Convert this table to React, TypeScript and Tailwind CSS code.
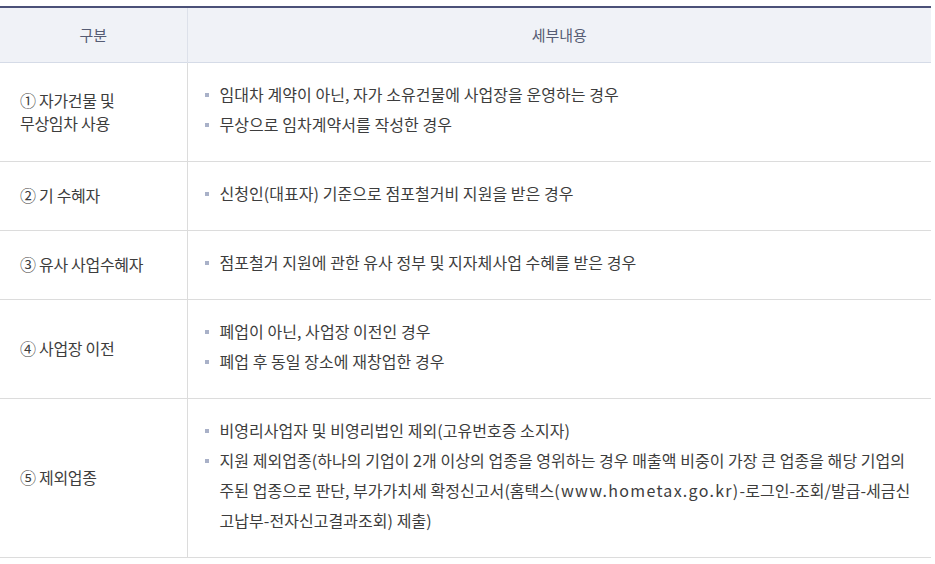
import type { ReactNode } from "react";

const rows: { label: string[]; items: ReactNode[] }[] = [
  {
    label: ["① 자가건물 및", "무상임차 사용"],
    items: [
      "임대차 계약이 아닌, 자가 소유건물에 사업장을 운영하는 경우",
      "무상으로 임차계약서를 작성한 경우",
    ],
  },
  {
    label: ["② 기 수혜자"],
    items: ["신청인(대표자) 기준으로 점포철거비 지원을 받은 경우"],
  },
  {
    label: ["③ 유사 사업수혜자"],
    items: ["점포철거 지원에 관한 유사 정부 및 지자체사업 수혜를 받은 경우"],
  },
  {
    label: ["④ 사업장 이전"],
    items: ["폐업이 아닌, 사업장 이전인 경우", "폐업 후 동일 장소에 재창업한 경우"],
  },
  {
    label: ["⑤ 제외업종"],
    items: [
      "비영리사업자 및 비영리법인 제외(고유번호증 소지자)",
      <>
        지원 제외업종(하나의 기업이 2개 이상의 업종을 영위하는 경우 매출액 비중이 가장 큰 업종을 해당 기업의 주된
        업종으로 판단, 부가가치세 확정신고서(홈택스
        <span className="tracking-[1.3px]">(www.hometax.go.kr)</span>
        -로그인-조회/발급-세금신고납부-전자신고결과조회) 제출)
      </>,
    ],
  },
];

export default function App() {
  return (
    <div
      className="w-[935px] h-[564px] bg-white pt-[6px]"
      style={{ fontFamily: '"Noto Sans CJK KR", "Noto Sans", sans-serif' }}
    >
      <table className="w-[931px] border-collapse table-fixed border-t-2 border-[#4b5178]">
        <colgroup>
          <col className="w-[187px]" />
          <col />
        </colgroup>
        <thead>
          <tr className="h-[55px] bg-[#f0f2f7] border-b border-[#d5dbe7]">
            <th className="border-r border-[#dde1ea] text-center text-[15px] font-normal text-[#565c74]">
              구분
            </th>
            <th className="text-center text-[15px] font-normal text-[#565c74]">세부내용</th>
          </tr>
        </thead>
        <tbody>
          {rows.map((row, i) => (
            <tr key={i} className="border-b border-[#dcdcdc]">
              <td className="border-r border-[#dcdcdc] pl-5 pr-3 align-middle text-[16px] leading-[23px] text-[#3d3d3d] tracking-[-0.3px]">
                {row.label.map((l) => (
                  <div key={l}>{l}</div>
                ))}
              </td>
              <td className="pt-[16px] pb-[22px] pl-[17px] pr-[19px] align-middle">
                <ul className="flex flex-col">
                  {row.items.map((it, j) => (
                    <li key={j} className="flex text-[16px] leading-[30px] text-[#3d3d3d] tracking-[0.05px]">
                      <span className="mt-[14px] mr-[11px] h-[4px] w-[4px] shrink-0 bg-[#a9b1c8]" />
                      <span className="break-all">{it}</span>
                    </li>
                  ))}
                </ul>
              </td>
            </tr>
          ))}
        </tbody>
      </table>
    </div>
  );
}
